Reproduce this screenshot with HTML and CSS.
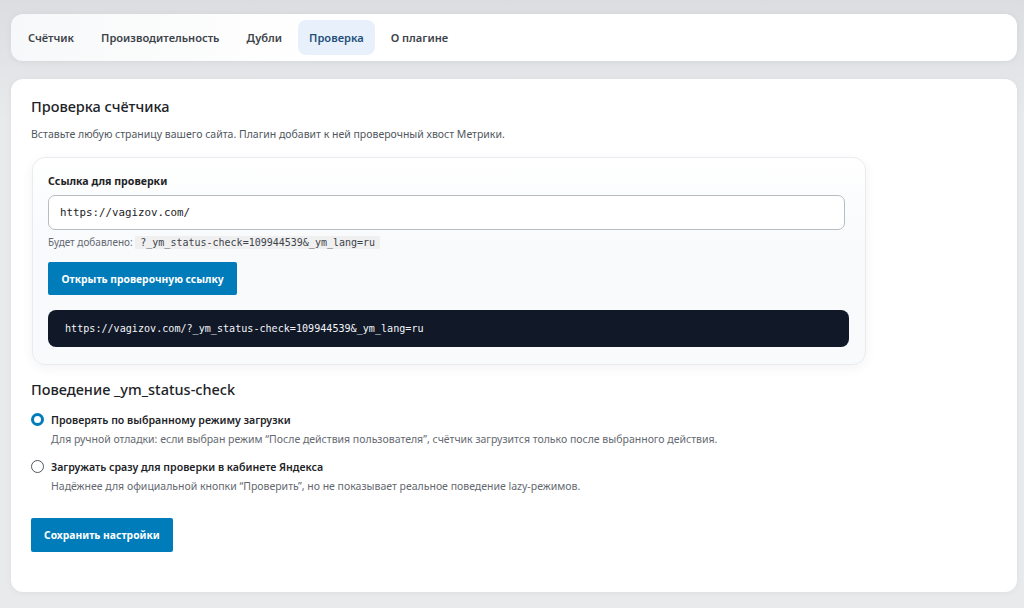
FILE: index.html
```html
<!DOCTYPE html>
<html>
<head>
    <title>Проверка счётчика</title>
    <link rel="stylesheet" href="styles.css">
</head>
<body>
    <nav class="tabs">
        <a class="tab">Счётчик</a>
        <a class="tab">Производительность</a>
        <a class="tab">Дубли</a>
        <a class="tab active">Проверка</a>
        <a class="tab">О плагине</a>
    </nav>

    <div class="panel">
        <h2 class="title">Проверка счётчика</h2>
        <p class="lead">Вставьте любую страницу вашего сайта. Плагин добавит к ней проверочный хвост Метрики.</p>

        <div class="check-box">
            <label class="field-label" for="url">Ссылка для проверки</label>
            <input class="url-input" id="url" type="text" value="https://vagizov.com/">
            <div class="hint">Будет добавлено: <code>?_ym_status-check=109944539&amp;_ym_lang=ru</code></div>
            <button class="btn">Открыть проверочную ссылку</button>
            <div class="result">https://vagizov.com/?_ym_status-check=109944539&amp;_ym_lang=ru</div>
        </div>

        <h2 class="subtitle">Поведение _ym_status-check</h2>

        <div class="option">
            <span class="radio checked"></span>
            <div>
                <div class="option-title">Проверять по выбранному режиму загрузки</div>
                <div class="option-desc">Для ручной отладки: если выбран режим “После действия пользователя”, счётчик загрузится только после выбранного действия.</div>
            </div>
        </div>
        <div class="option">
            <span class="radio"></span>
            <div>
                <div class="option-title">Загружать сразу для проверки в кабинете Яндекса</div>
                <div class="option-desc">Надёжнее для официальной кнопки “Проверить”, но не показывает реальное поведение lazy-режимов.</div>
            </div>
        </div>

        <button class="btn save">Сохранить настройки</button>
    </div>
</body>
</html>
```

FILE: styles.css
```css
body {
    margin: 0;
    padding: 14px 7px 16px 11px;
    background: linear-gradient(#dcdde0, #e9eaec 120px, #e9eaec);
    font-family: "Noto Sans", "Open Sans", sans-serif;
    color: #1d2327;
    height: 608px;
    box-sizing: border-box;
}

.tabs {
    display: flex;
    gap: 5px;
    padding: 6px;
    background: linear-gradient(90deg, #f7f8f9, #ffffff 30%);
    border-radius: 12px;
    box-shadow: 0 1px 6px rgba(0, 0, 0, 0.06);
}

.tab {
    padding: 0 11px;
    height: 35px;
    line-height: 35px;
    border-radius: 8px;
    font-size: 11.1px;
    font-weight: 600;
    color: #3c434a;
}

.tab.active {
    background: #e8f1fb;
    color: #1f4f7a;
}

.panel {
    margin-top: 18px;
    padding: 14px 20px 40px 20px;
    background: #ffffff;
    border-radius: 12px;
    box-shadow: 0 1px 6px rgba(0, 0, 0, 0.05);
}

.title {
    margin: 0;
    font-size: 14.5px;
    font-weight: 500;
    line-height: 26px;
}

.lead {
    margin: 7px 0 15px;
    font-size: 10.5px;
    color: #50575e;
    line-height: 16px;
}

.check-box {
    width: 834px;
    box-sizing: border-box;
    margin-left: 1px;
    padding: 15px 16px 17px 15px;
    background: linear-gradient(#ffffff, #f8fafc 40%);
    border: 1px solid #e8ebef;
    border-radius: 13px;
    box-shadow: 0 3px 12px rgba(15, 23, 42, 0.05);
}

.field-label {
    display: block;
    font-size: 10.6px;
    font-weight: 700;
    line-height: 16px;
}

.url-input {
    display: block;
    width: 797px;
    height: 35px;
    box-sizing: border-box;
    margin-top: 6px;
    padding: 0 11px;
    border: 1px solid #b8bcc0;
    border-radius: 7px;
    background: #fff;
    font-family: "DejaVu Sans Mono", monospace;
    font-size: 10.8px;
    color: #1d2327;
}

.hint {
    margin-top: 4px;
    font-size: 10px;
    color: #646970;
    line-height: 16px;
}

.hint code {
    padding: 1px 5px;
    background: #f0f0f1;
    font-family: "DejaVu Sans Mono", monospace;
    font-size: 10px;
    color: #3c434a;
}

.btn {
    display: block;
    margin-top: 11px;
    height: 33px;
    padding: 0 13.5px;
    border: none;
    border-radius: 2px;
    background: #007cba;
    color: #fff;
    font-family: "Noto Sans", "Open Sans", sans-serif;
    font-size: 10.3px;
    font-weight: 700;
    cursor: pointer;
}

.result {
    margin-top: 15px;
    height: 37px;
    line-height: 37px;
    padding: 0 17px;
    background: #111827;
    border-radius: 8px;
    color: #f1f5f9;
    font-family: "DejaVu Sans Mono", monospace;
    font-size: 10.1px;
}

.subtitle {
    margin: 12px 0 10px;
    font-size: 14.5px;
    font-weight: 500;
    line-height: 24px;
}

.option {
    display: flex;
    gap: 7px;
    margin-bottom: 9px;
}

.radio {
    flex: none;
    width: 13px;
    height: 13px;
    margin-top: 2px;
    box-sizing: border-box;
    border: 1.5px solid #50575e;
    border-radius: 50%;
}

.radio.checked {
    border: 3.5px solid #007cba;
}

.option-title {
    font-size: 10.6px;
    font-weight: 600;
    line-height: 18px;
}

.option-desc {
    font-size: 10.5px;
    color: #646970;
    line-height: 20px;
}

.btn.save {
    margin-top: 22px;
    height: 34px;
    padding: 0 13px;
}
```
